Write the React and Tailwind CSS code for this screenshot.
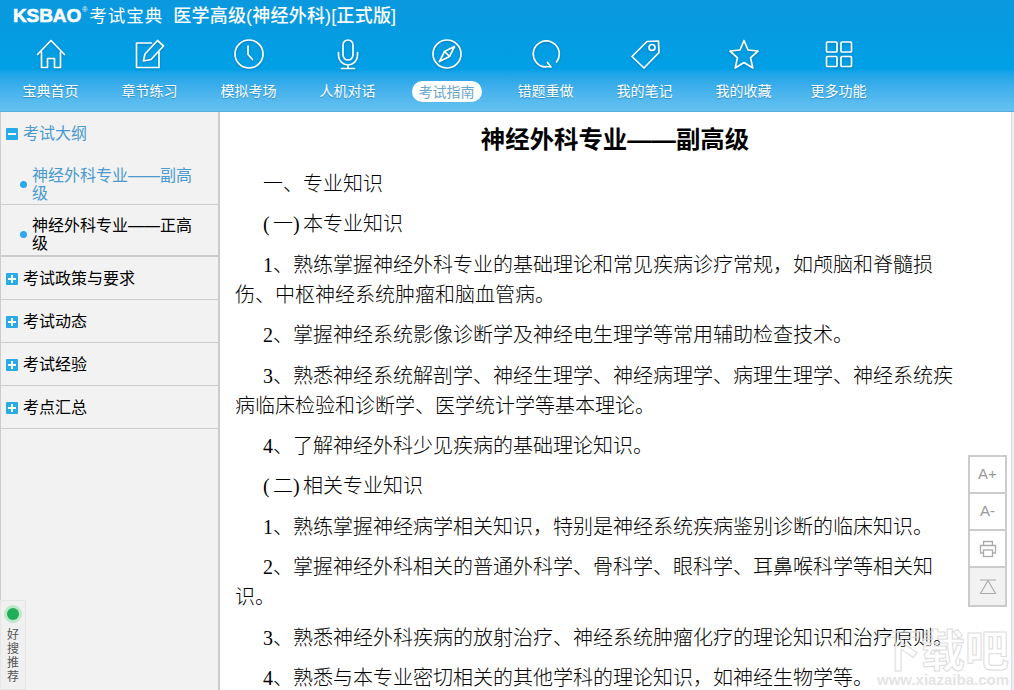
import React from "react";

const Svg = ({ children }) => (
  <svg width="32" height="32" viewBox="0 0 32 32" fill="none" stroke="#fff" strokeWidth="1.7" strokeLinecap="round" strokeLinejoin="round" className="drop-shadow-[0_1px_1px_rgba(0,80,140,0.45)]">
    {children}
  </svg>
);

const icons = {
  home: (
    <Svg>
      <path d="M2.5 16.5 16 2.5l13.5 14" />
      <path d="M6.5 14v15.5h6V20.500h7v9h6V14" />
    </Svg>
  ),
  edit: (
    <Svg>
      <path d="M25 14v15.500H2.500V5h15" />
      <path d="M9.500 23l1.500-7L23.500 2.500 29.500 8 17 21.500z" />
    </Svg>
  ),
  clock: (
    <Svg>
      <circle cx="16" cy="16" r="14" />
      <path d="M15 8v8.500l4.500 5" />
    </Svg>
  ),
  mic: (
    <Svg>
      <rect x="11" y="2" width="10" height="20" rx="5" />
      <path d="M6.500 14.500v3a9.500 9.500 0 0 0 19 0v-3M16 27v3.500M9.500 30.500h13" />
    </Svg>
  ),
  compass: (
    <Svg>
      <circle cx="16" cy="16" r="14" />
      <path d="M23.500 8.500 18.500 18.500 8.500 23.500 13.500 13.500zM13.500 13.500l5 5" />
    </Svg>
  ),
  retry: (
    <Svg>
      <path d="M26.500 24A13 13 0 1 0 16 29" />
      <path d="M16 29.500l5 .5-3.500-4.500" transform="translate(0 -1)" />
    </Svg>
  ),
  tag: (
    <Svg>
      <path d="M3 18.500 18 3.500l11.500-.5.500 11.500L15 30z" />
      <circle cx="23" cy="9.500" r="3" />
    </Svg>
  ),
  star: (
    <Svg>
      <path d="M16 2.500l4 9.500 10 1-7.500 6.800 2.300 10.200L16 24.500 7.200 30l2.300-10.200L2 13l10-1z" />
    </Svg>
  ),
  grid: (
    <Svg>
      <rect x="3.500" y="4" width="10.500" height="10" rx="1" />
      <rect x="18" y="4" width="10.500" height="10" rx="1" />
      <rect x="3.500" y="18.500" width="10.500" height="10" rx="1" />
      <rect x="18" y="18.500" width="10.500" height="10" rx="1" />
    </Svg>
  ),
};

const navItems = [
  ["home", "宝典首页"],
  ["edit", "章节练习"],
  ["clock", "模拟考场"],
  ["mic", "人机对话"],
  ["compass", "考试指南", true],
  ["retry", "错题重做"],
  ["tag", "我的笔记"],
  ["star", "我的收藏"],
  ["grid", "更多功能"],
];

const Sign = ({ open }) => (
  <span className="relative w-[12px] h-[12px] shrink-0 bg-[#29abe8] rounded-[1px]">
    <span className="absolute left-[2px] top-[5px] w-[8px] h-[2px] bg-white" />
    {!open && <span className="absolute left-[5px] top-[2px] w-[2px] h-[8px] bg-white" />}
  </span>
);

const Row = ({ label }) => (
  <div className="h-[43px] flex items-center gap-[5px] pl-[5px] pt-[1px] border-b border-[#ccc] text-[16px] text-black">
    <Sign />
    <span>{label}</span>
  </div>
);

const Sub = ({ active, cls, children }) => (
  <div className={`flex items-start pl-[19px] pt-[12px] ${cls} ${active ? "text-[#4a9ad0]" : "text-black"}`}>
    <span className="w-[7px] h-[7px] rounded-full bg-[#2ea7ee] shrink-0 mr-[5px] mt-[14px]" />
    <span className="w-[165px] leading-[18px] text-[16px]">{children}</span>
  </div>
);

const Para = ({ text }) => {
  if (text.startsWith("(")) {
    const end = text.indexOf(")");
    return (
      <p className="indent-[28px]">
        <span className="tracking-[3.300px]">(</span>
        {text.slice(1, end)}
        <span className="tracking-[3.300px]">)</span>
        {text.slice(end + 1)}
      </p>
    );
  }
  return <p className="indent-[28px]">{text}</p>;
};

const paras = [
  "一、专业知识",
  "(一)本专业知识",
  "1、熟练掌握神经外科专业的基础理论和常见疾病诊疗常规，如颅脑和脊髓损伤、中枢神经系统肿瘤和脑血管病。",
  "2、掌握神经系统影像诊断学及神经电生理学等常用辅助检查技术。",
  "3、熟悉神经系统解剖学、神经生理学、神经病理学、病理生理学、神经系统疾病临床检验和诊断学、医学统计学等基本理论。",
  "4、了解神经外科少见疾病的基础理论知识。",
  "(二)相关专业知识",
  "1、熟练掌握神经病学相关知识，特别是神经系统疾病鉴别诊断的临床知识。",
  "2、掌握神经外科相关的普通外科学、骨科学、眼科学、耳鼻喉科学等相关知识。",
  "3、熟悉神经外科疾病的放射治疗、神经系统肿瘤化疗的理论知识和治疗原则。",
  "4、熟悉与本专业密切相关的其他学科的理论知识，如神经生物学等。",
];

export default function App() {
  return (
    <div className="relative w-[1014px] h-[690px] overflow-hidden bg-white flex flex-col font-['Liberation_Sans','Noto_Sans_CJK_SC',sans-serif]">
      <header className="h-[112px] shrink-0 flex flex-col border-b border-[#58aee0] bg-gradient-to-b from-[#0b98de] via-[#00a0e6] via-[62%] to-[#66c2f1] text-white">
        <div className="h-[32px] flex items-center pl-[13px] shrink-0">
          <span className="font-['Liberation_Sans'] font-bold text-[19px] tracking-[-0.1px] [-webkit-text-stroke:0.6px_#fff]">KSBAO</span>
          <span className="text-[7px] self-start mt-[5px] ml-[1px]">®</span>
          <span className="text-[17.500px] ml-[2px] tracking-[1px]">考试宝典</span>
          <span className="text-[18px] font-medium ml-[10px] tracking-[0.2px] whitespace-nowrap">医学高级(神经外科)[正式版]</span>
        </div>
        <nav className="flex pl-[1px] pt-[6px]">
          {navItems.map(([icon, label, active], i) => (
            <div key={label} className={`w-[99px] flex flex-col items-center ${i === 8 ? "-ml-[4px]" : ""}`}>
              <div className="h-[32px]">{icons[icon]}</div>
              {active ? (
                <span className="mt-[11px] h-[21px] w-[70px] rounded-full bg-white text-[#6ba6c9] text-[14px] leading-[22px] text-center">{label}</span>
              ) : (
                <span className="mt-[11px] h-[21px] text-[14px] leading-[21px] [text-shadow:0_1px_1px_rgba(0,80,140,0.4)]">{label}</span>
              )}
            </div>
          ))}
        </nav>
      </header>

      <main className="flex flex-1 min-h-0">
        <aside className="w-[220px] shrink-0 bg-[#f2f2f2] border-l border-l-[#ccc] border-r-2 border-r-[#ccc]">
          <div className="h-[43px] flex items-center gap-[5px] pl-[5px] pt-[1px] text-[16px] text-[#4a9ad0]">
            <Sign open />
            <span>考试大纲</span>
          </div>
          <Sub active cls="h-[50px] border-b border-[#ccc]">神经外科专业——副高级</Sub>
          <Sub cls="h-[52px] border-b-2 border-[#ccc]">神经外科专业——正高级</Sub>
          <Row label="考试政策与要求" />
          <Row label="考试动态" />
          <Row label="考试经验" />
          <Row label="考点汇总" />
        </aside>

        <article className="flex-1 min-w-0 pl-[15px] pt-[12px] text-black font-['Liberation_Serif','Noto_Sans_CJK_SC',serif]">
          <h1 className="w-[760px] text-center text-[24.400px] leading-[32px] font-bold font-['Liberation_Sans','Noto_Sans_CJK_SC',sans-serif] mb-[13px]">神经外科专业——副高级</h1>
          <div className="w-[722px] flex flex-col gap-[10.400px] text-[20px] leading-[30px] font-light">
            {paras.map((t) => (
              <Para key={t} text={t} />
            ))}
          </div>
        </article>

        <div className="w-[3px] shrink-0 border-l border-[#d5dbe8] bg-[#eeeeee]" />
      </main>

      {/* download-site watermark over the content */}
      <div className="absolute left-[877px] top-[627px] w-[132px] text-center pointer-events-none">
        <div className="text-[44px] leading-[50px] font-bold text-transparent whitespace-nowrap [-webkit-text-stroke:1px_#dcdcdc]">下载吧</div>
        <div className="-mt-[4px] text-[15px] leading-[14px] font-bold text-[#e4e4e4]">www.xiazaiba.com</div>
      </div>

      {/* floating tools */}
      <div className="absolute left-[968px] top-[455px] w-[39px] border-2 border-[#ccc] bg-white flex flex-col text-[#999]">
        <div className="h-[37px] flex items-center justify-center text-[15px] border-b-2 border-[#ccc]">A+</div>
        <div className="h-[37px] flex items-center justify-center text-[15px] border-b-2 border-[#ccc]">A-</div>
        <div className="h-[37px] flex items-center justify-center border-b-2 border-[#ccc]">
          <svg width="18" height="18" viewBox="0 0 18 18" fill="none" stroke="#aaa" strokeWidth="1.300">
            <path d="M4.500 5.500V1.500h9v4M4.500 13H1.500V5.500h15V13h-3" />
            <rect x="4.500" y="10" width="9" height="6.500" />
          </svg>
        </div>
        <div className="h-[37px] flex items-center justify-center bg-[#f2f2f2]">
          <svg width="18" height="18" viewBox="0 0 18 18" fill="none" stroke="#aaa" strokeWidth="1.100">
            <path d="M1 2h16M9 2.500 1.500 15.500h15z" />
          </svg>
        </div>
      </div>

      {/* 好搜推荐 tab */}
      <div className="absolute left-0 top-[600px] w-[26px] h-[90px] bg-[#f0f0f0] border border-[#e6e6e6] flex flex-col items-center pt-[4px] text-[#555] text-[12px] leading-[14px]">
        <span className="w-[12px] h-[12px] rounded-full bg-[#22ad5c] ring-[3px] ring-[#bce8c9] mb-[8px] mt-[3px]" />
        <span>好</span>
        <span>搜</span>
        <span>推</span>
        <span>荐</span>
      </div>
    </div>
  );
}
